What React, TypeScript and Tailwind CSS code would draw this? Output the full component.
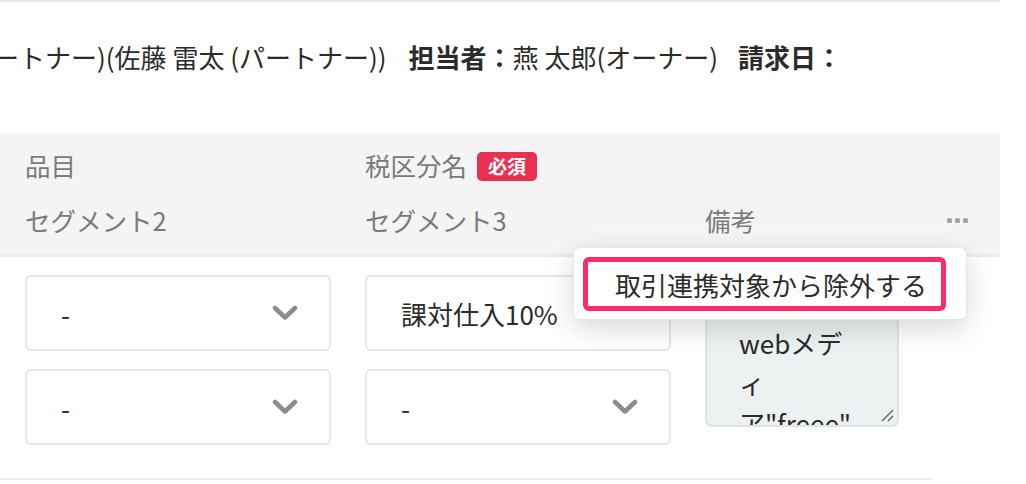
const font = { fontFamily: '"Noto Sans CJK JP", "Noto Sans", sans-serif' };

function Chevron() {
  return (
    <svg width="26" height="16" viewBox="0 0 26 16" fill="none">
      <polyline points="3,3 13,12.5 23,3" stroke="#8c8c8c" strokeWidth="4.5" strokeLinecap="round" strokeLinejoin="round" />
    </svg>
  );
}

function SelectBox({ value }: { value: string }) {
  return (
    <div className="w-[306px] h-[76px] bg-white border-2 border-[#e6e6e6] rounded-[6px] flex items-center justify-between pl-[34px] pr-[31px]">
      <span className="text-[26px] text-[#2b2b2b]">{value}</span>
      <Chevron />
    </div>
  );
}

export default function App() {
  return (
    <div className="w-[1026px] h-[484px] bg-white overflow-hidden relative" style={font}>
      <div className="w-[1000px] border-t-2 border-[#e3e8ec]" />

      {/* invoice summary line, scrolled off to the left */}
      <div className="h-[132px] pt-[35px] -ml-[33px] whitespace-nowrap text-[26px] leading-[40px] text-[#2b2b2b]">
        <span>パートナー)(佐藤 雷太 (パートナー))</span>
        <span className="font-bold ml-[22px]">担当者：</span>
        <span>燕 太郎(オーナー)</span>
        <span className="font-bold ml-[20px]">請求日：</span>
      </div>

      {/* table header */}
      <div className="w-[1000px] bg-[#f4f4f4] border-b-[3px] border-[#ececec] pt-[14px] pb-[17px] pl-[25px] pr-[32px] text-[25.5px] text-[#7a7a7a]">
        <div className="flex h-[34px] items-center">
          <div className="w-[340px]">品目</div>
          <div className="w-[340px] flex items-center gap-[10px]">
            <span>税区分名</span>
            <span className="h-[29px] px-[11px] rounded-[5px] bg-[#e8314f] text-white text-[19px] font-bold flex items-center mt-[2px]">必須</span>
          </div>
        </div>
        <div className="flex h-[34px] items-center mt-[21px]">
          <div className="w-[340px]">セグメント2</div>
          <div className="w-[340px]">セグメント3</div>
          <div className="flex-1 flex items-center justify-between">
            <span>備考</span>
            <div className="flex gap-[3px]">
              <span className="w-[5px] h-[5px] rounded-[1.5px] bg-[#a3a3a3]" />
              <span className="w-[5px] h-[5px] rounded-[1.5px] bg-[#a3a3a3]" />
              <span className="w-[5px] h-[5px] rounded-[1.5px] bg-[#a3a3a3]" />
            </div>
          </div>
        </div>
      </div>

      {/* table row */}
      <div className="w-[932px] border-b-2 border-[#ededed] pt-[18px] pb-[33px] pl-[25px] flex">
        <div className="w-[340px] flex flex-col gap-[18px]">
          <SelectBox value="-" />
          <SelectBox value="-" />
        </div>
        <div className="w-[340px] flex flex-col gap-[18px]">
          <SelectBox value="課対仕入10%" />
          <SelectBox value="-" />
        </div>
        <div className="relative w-[194px] h-[152px] bg-[#edf1f2] border-2 border-[#dde4e7] rounded-[7px] overflow-hidden">
          <div className="pl-[32px] pt-[6px] text-[26px] leading-[40px] text-[#2b2b2b] whitespace-nowrap">
            広告掲載
            <br />
            webメデ
            <br />
            ィ
            <br />
            ア"freee"
          </div>
          <svg className="absolute right-[3px] bottom-[3px]" width="14" height="14" viewBox="0 0 14 14">
            <line x1="2" y1="13" x2="13" y2="2" stroke="#666" strokeWidth="1.4" />
            <line x1="8" y1="13" x2="13" y2="8" stroke="#666" strokeWidth="1.4" />
          </svg>
        </div>
      </div>

      {/* row action menu */}
      <div className="absolute left-[573px] top-[247px] w-[394px] h-[73px] bg-white border border-[#e6e6e6] rounded-[7px] shadow-[0_8px_28px_rgba(0,0,0,0.16)] pl-[9px] pt-[9px]">
        <div className="w-[363px] h-[54px] border-[5px] border-[#ff2a6a] rounded-[6px] flex items-center pl-[27px] text-[26px] text-[#2b2b2b]">
          取引連携対象から除外する
        </div>
      </div>
    </div>
  );
}
